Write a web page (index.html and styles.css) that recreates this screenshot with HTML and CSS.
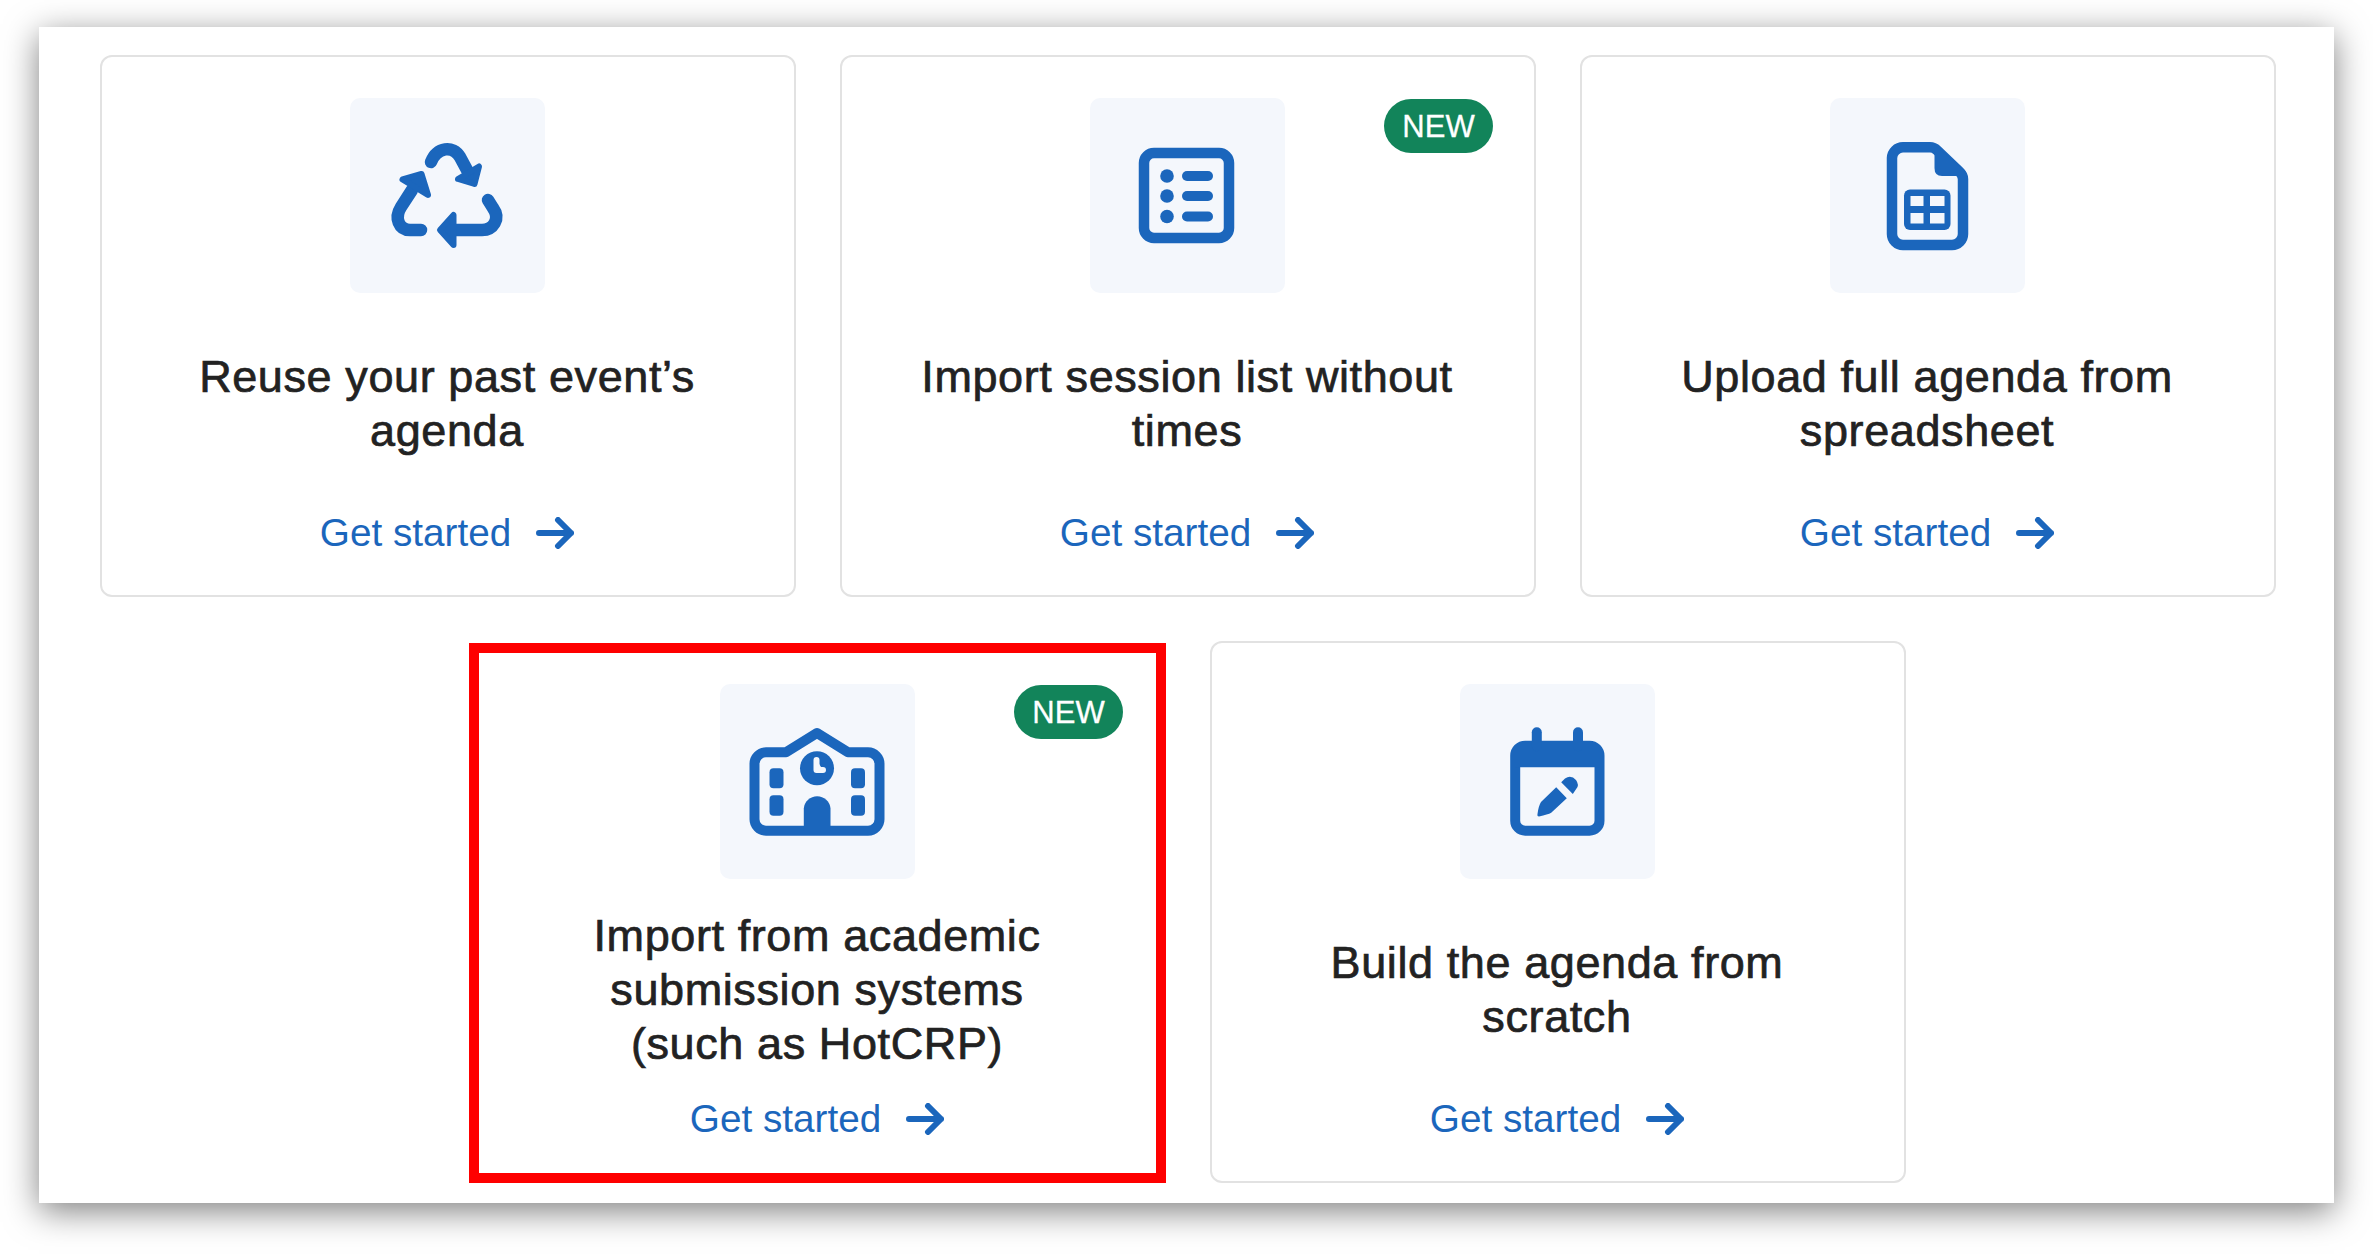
FILE: index.html
```html
<!DOCTYPE html>
<html lang="en">
<head>
  <meta charset="UTF-8" />
  <meta name="viewport" content="width=device-width, initial-scale=1.0"/>
  <title>Add agenda</title>
  <link rel="stylesheet" href="styles.css">
</head>
<body>
  <div class="panel">
    <div class="card">
      <div class="icon-box">
        <svg class="icon" viewBox="0 0 128 128">
          <g class="line" stroke-width="12.500">
            <path d="M48 30C54 15 70 13 77 25L84 38"/>
            <path d="M38 98H27C16 98 11 86 18 75L29 58"/>
            <path d="M105 68L110 76C118 87 110 98 99 98H72"/>
          </g>
          <g class="head">
            <path d="M96 34.500L91.500 52L75 47Z"/>
            <path d="M19.500 47.500L38.500 42L45 63Z"/>
            <path d="M57 98L70.500 83V113Z"/>
          </g>
        </svg>
      </div>
      <div class="title">Reuse your past event’s<br>agenda</div>
      <a class="start" href="#">Get started
        <svg class="arrow" viewBox="0 0 38 32"><path d="M3 16H35M22 3L35 16L22 29"/></svg>
      </a>
    </div>

    <div class="card">
      <span class="badge">NEW</span>
      <div class="icon-box">
        <svg class="icon" viewBox="0 0 128 128">
          <rect class="line" x="21" y="21" width="85" height="85" rx="10" stroke-width="10.500"/>
          <circle class="solid" cx="44" cy="44" r="6.800"/>
          <circle class="solid" cx="44" cy="64" r="6.800"/>
          <circle class="solid" cx="44" cy="84.500" r="6.800"/>
          <rect class="solid" x="59" y="39" width="31" height="10" rx="5"/>
          <rect class="solid" x="59" y="59" width="31" height="10" rx="5"/>
          <rect class="solid" x="59" y="79.500" width="31" height="10" rx="5"/>
        </svg>
      </div>
      <div class="title">Import session list without<br>times</div>
      <a class="start" href="#">Get started
        <svg class="arrow" viewBox="0 0 38 32"><path d="M3 16H35M22 3L35 16L22 29"/></svg>
      </a>
    </div>

    <div class="card">
      <div class="icon-box">
        <svg class="icon" viewBox="0 0 128 128">
          <path class="line" stroke-width="10.500" d="M40 15.300H67Q71 15.300 74 18.300L96 39.300Q100 43 100 47V102A11 11 0 0 1 89 113H40A11 11 0 0 1 29 102V26A11 11 0 0 1 40 15.300Z"/>
          <path class="solid" d="M71.500 13L103 40V44H79Q71.500 44 71.500 36Z"/>
          <rect class="solid" x="41" y="57.500" width="46.500" height="40.500" rx="6"/>
          <g class="cutout">
            <rect x="47.500" y="64" width="13" height="10"/>
            <rect x="67" y="64" width="14.500" height="10"/>
            <rect x="47.500" y="81" width="13" height="10.500"/>
            <rect x="67" y="81" width="14.500" height="10.500"/>
          </g>
        </svg>
      </div>
      <div class="title">Upload full agenda from<br>spreadsheet</div>
      <a class="start" href="#">Get started
        <svg class="arrow" viewBox="0 0 38 32"><path d="M3 16H35M22 3L35 16L22 29"/></svg>
      </a>
    </div>

    <div class="card card-marked">
      <span class="badge">NEW</span>
      <div class="icon-box">
        <svg class="icon" viewBox="0 0 128 128">
          <path class="line" stroke-width="10" d="M33 34.300L64 15L95 34.300H115A11.500 11.500 0 0 1 126.500 45.800V101A11.500 11.500 0 0 1 115 112.700H13A11.500 11.500 0 0 1 1.500 101V45.800A11.500 11.500 0 0 1 13 34.300Z"/>
          <circle class="solid" cx="64" cy="50.300" r="17"/>
          <path class="clock" d="M63.500 42V52H70"/>
          <rect class="solid" x="16.500" y="50.300" width="14" height="20" rx="4"/>
          <rect class="solid" x="16.500" y="77.300" width="14" height="20.500" rx="4"/>
          <rect class="solid" x="98" y="50.300" width="14" height="20" rx="4"/>
          <rect class="solid" x="98" y="77.300" width="14" height="20.500" rx="4"/>
          <path class="solid" d="M50.800 113V90.500A13.400 13.400 0 0 1 77.500 90.500V113Z"/>
        </svg>
      </div>
      <div class="title">Import from academic<br>submission systems<br>(such as HotCRP)</div>
      <a class="start" href="#">Get started
        <svg class="arrow" viewBox="0 0 38 32"><path d="M3 16H35M22 3L35 16L22 29"/></svg>
      </a>
    </div>

    <div class="card">
      <div class="icon-box">
        <svg class="icon" viewBox="0 0 128 128">
          <rect class="line" x="22.200" y="27.700" width="84.300" height="85" rx="10" stroke-width="10"/>
          <path class="solid" d="M22 28H107V49.300H22Z"/>
          <rect class="solid" x="38.800" y="9.300" width="10" height="24" rx="5"/>
          <rect class="solid" x="80" y="9.300" width="10" height="24" rx="5"/>
          <path class="solid" d="M63.200 69.300L73.800 80.300L58.200 94.700Q55 96.500 46 98.500Q44 98.500 44.500 96Q45.500 88 48 84Z"/>
          <path class="solid" d="M68.200 64.300L72 60.500Q78 56.500 83 62Q86.500 67 83.500 70.500L79.800 76Z"/>
        </svg>
      </div>
      <div class="title">Build the agenda from<br>scratch</div>
      <a class="start" href="#">Get started
        <svg class="arrow" viewBox="0 0 38 32"><path d="M3 16H35M22 3L35 16L22 29"/></svg>
      </a>
    </div>
  </div>
</body>
</html>
```

FILE: styles.css
```css
html, body {
  height: 1254px;
  overflow: hidden;
}
body {
  box-sizing: border-box;
  margin: 0;
  padding: 27px 39px 0;
  background: #fff;
  font-family: "Liberation Sans", Arial, sans-serif;
}
.panel {
  box-sizing: border-box;
  width: 2295px;
  height: 1176px;
  padding: 28px 58px 0 61px;
  display: flex;
  flex-wrap: wrap;
  justify-content: center;
  align-content: flex-start;
  gap: 44px;
  background: #fff;
  box-shadow: 0 8px 32px rgba(0,0,0,0.5);
}
.card {
  box-sizing: border-box;
  position: relative;
  width: 696px;
  height: 542px;
  padding: 41px 21px 44px 19px;
  display: flex;
  flex-direction: column;
  align-items: center;
  background: #fff;
  border: 2px solid #e2e2e2;
  border-radius: 12px;
}
.card-marked {
  border-color: transparent;
}
.card-marked::after {
  content: "";
  position: absolute;
  inset: 0 -2px -2px -3px;
  border: 10px solid #fe0000;
  pointer-events: none;
}
.icon-box {
  flex: none;
  width: 195px;
  height: 195px;
  display: flex;
  align-items: center;
  justify-content: center;
  background: #f4f7fc;
  border-radius: 10px;
}
.icon {
  width: 128px;
  height: 128px;
  overflow: visible;
}
.line {
  fill: none;
  stroke: #1b66bc;
  stroke-linecap: round;
  stroke-linejoin: round;
}
.head {
  fill: #1b66bc;
  stroke: #1b66bc;
  stroke-width: 6;
  stroke-linejoin: round;
}
.solid {
  fill: #1b66bc;
}
.cutout {
  fill: #f4f7fc;
}
.clock {
  fill: #f4f7fc;
  stroke: #f4f7fc;
  stroke-width: 6;
  stroke-linecap: round;
  stroke-linejoin: round;
}
.badge {
  position: absolute;
  top: 42px;
  right: 41px;
  width: 109px;
  height: 54px;
  line-height: 55px;
  text-align: center;
  font-size: 31px;
  color: #fff;
  background: #12845a;
  border-radius: 27px;
  -webkit-text-stroke: 0.3px #fff;
}
.title {
  flex: 1;
  display: flex;
  align-items: center;
  justify-content: center;
  text-align: center;
  font-size: 45px;
  line-height: 54px;
  letter-spacing: 0.6px;
  color: #222;
  -webkit-text-stroke: 0.7px #222;
}
.start {
  display: flex;
  align-items: center;
  gap: 25px;
  height: 36px;
  font-size: 38.700px;
  color: #1b66bc;
  text-decoration: none;
}
.arrow {
  width: 38px;
  height: 32px;
  fill: none;
  stroke: #1b66bc;
  stroke-width: 6;
  stroke-linecap: round;
  stroke-linejoin: round;
}
```
